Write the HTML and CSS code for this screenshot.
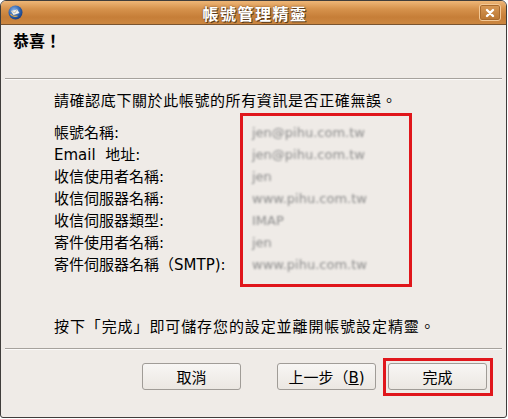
FILE: index.html
```html
<!DOCTYPE html>
<html lang="zh-Hant">
<head>
  <meta charset="UTF-8">
  <title>帳號管理精靈</title>
  <link rel="stylesheet" href="styles.css">
</head>
<body>
  <div class="window">
    <div class="titlebar">
      <svg class="app-icon" width="15" height="15" viewBox="0 0 15 15">
        <defs>
          <radialGradient id="globe" cx="0.4" cy="0.35" r="0.7">
            <stop offset="0" stop-color="#8fb7e8"/>
            <stop offset="0.6" stop-color="#2d62b0"/>
            <stop offset="1" stop-color="#173a78"/>
          </radialGradient>
        </defs>
        <circle cx="7.5" cy="7.5" r="7" fill="url(#globe)"/>
        <path d="M3 6 L9 4.5 L11.5 8 L5.5 10 Z" fill="#f3f1ea"/>
        <path d="M3 6 L7 8 L9 4.5" fill="none" stroke="#b9b4a6" stroke-width="0.8"/>
        <path d="M2.5 9 Q5 12.5 9.5 11" fill="none" stroke="#f0b040" stroke-width="1.2"/>
      </svg>
      <span class="title">帳號管理精靈</span>
      <span class="close-btn">
        <svg width="10" height="10" viewBox="0 0 10 10">
          <path d="M2 2 L8 8 M8 2 L2 8" stroke="#fff" stroke-width="2.4" stroke-linecap="round"/>
        </svg>
      </span>
    </div>

    <div class="header">
      <h1>恭喜！</h1>
    </div>
    <div class="separator"></div>

    <div class="content">
      <p class="intro">請確認底下關於此帳號的所有資訊是否正確無誤。</p>
      <div class="summary">
        <div class="labels">
          <div>帳號名稱:</div>
          <div>Email&nbsp; 地址:</div>
          <div>收信使用者名稱:</div>
          <div>收信伺服器名稱:</div>
          <div>收信伺服器類型:</div>
          <div>寄件使用者名稱:</div>
          <div>寄件伺服器名稱（SMTP):</div>
        </div>
        <div class="values">
          <div>jen@pihu.com.tw</div>
          <div>jen@pihu.com.tw</div>
          <div>jen</div>
          <div>www.pihu.com.tw</div>
          <div>IMAP</div>
          <div>jen</div>
          <div>www.pihu.com.tw</div>
        </div>
      </div>
      <p class="outro">按下「完成」即可儲存您的設定並離開帳號設定精靈。</p>
    </div>
    <div class="separator"></div>

    <div class="buttons">
      <button class="btn btn-cancel">取消</button>
      <button class="btn">上一步（<u>B</u>)</button>
      <span class="mark">
        <button class="btn">完成</button>
      </span>
    </div>
  </div>
</body>
</html>
```

FILE: styles.css
```css
:root {
  --window-bg: #efebe7;
  --border-dark: #3f3d3b;
  --mark-red: #e0161b;
  --line-dark: #a6a29d;
}

body {
  margin: 0;
  background: #ffffff;
  font-family: "DejaVu Sans", "Noto Sans CJK TC", sans-serif;
  font-size: 15px;
  color: #000;
}

.window {
  width: 505px;
  height: 416px;
  display: flex;
  flex-direction: column;
  background: var(--window-bg);
  border: 1px solid var(--border-dark);
  border-radius: 6px 6px 3px 3px;
  overflow: hidden;
}

.titlebar {
  height: 23px;
  flex: none;
  display: flex;
  align-items: center;
  padding: 0 5px 0 7px;
  background: linear-gradient(#eeb677, #d6924c 35%, #c67e38 70%, #cc8741);
  border-bottom: 1px solid #7a5430;
}

.app-icon {
  flex: none;
}

.title {
  flex: 1;
  text-align: center;
  color: #fff;
  font-weight: bold;
  font-size: 16px;
  letter-spacing: 1.5px;
  text-shadow: 1px 1px 0 #5a3a1a, 0 0 2px #6a4420;
  padding-left: 8px;
}

.close-btn {
  width: 20px;
  height: 15px;
  flex: none;
  display: flex;
  align-items: center;
  justify-content: center;
  border: 1px solid #f3c896;
  border-radius: 3px;
  background: linear-gradient(#d99a58, #b97530);
  box-shadow: inset 0 0 0 1px #a8692c;
}

.header {
  height: 47px;
  flex: none;
  padding: 6px 0 0 12px;
}

.header h1 {
  margin: 0;
  font-size: 16px;
  line-height: 22px;
  font-weight: bold;
}

.separator {
  flex: none;
  margin: 0 4px;
  border-top: 1px solid var(--line-dark);
  border-bottom: 1px solid #fbfaf9;
}

.content {
  flex: none;
  padding: 10px 0 0 53px;
  height: 268px;
  box-sizing: border-box;
}

.content p {
  margin: 0;
  line-height: 22px;
  letter-spacing: 0.6px;
}

.intro {
  margin-bottom: 1px !important;
}

.outro {
  margin-top: 29px !important;
  letter-spacing: 0.9px !important;
}

.summary {
  display: flex;
}

.labels {
  width: 186px;
  padding-top: 9px;
}

.labels div,
.values div {
  height: 22px;
  line-height: 22px;
  white-space: nowrap;
}

.values {
  width: 157px;
  height: 162px;
  border: 3px solid var(--mark-red);
  padding: 6px 0 0 9px;
}

.values div {
  color: #8c8c8c;
  font-size: 13px;
  filter: blur(1.1px);
}

.buttons {
  flex: 1;
  display: flex;
  align-items: flex-start;
  justify-content: flex-end;
  padding: 8px 13px 0 0;
}

.btn {
  width: 99px;
  height: 27px;
  margin-top: 5px;
  padding: 0;
  font-family: inherit;
  font-size: 15px;
  color: #000;
  background: linear-gradient(#f8f6f4, #ebe7e2);
  border: 1px solid #a09c97;
  border-radius: 3px;
}

.btn-cancel {
  margin-right: 36px;
}

.mark {
  display: flex;
  margin-left: 7px;
  padding: 2px 3px 3px 2px;
  border: 3px solid var(--mark-red);
}

.mark .btn {
  margin: 0;
}
```
